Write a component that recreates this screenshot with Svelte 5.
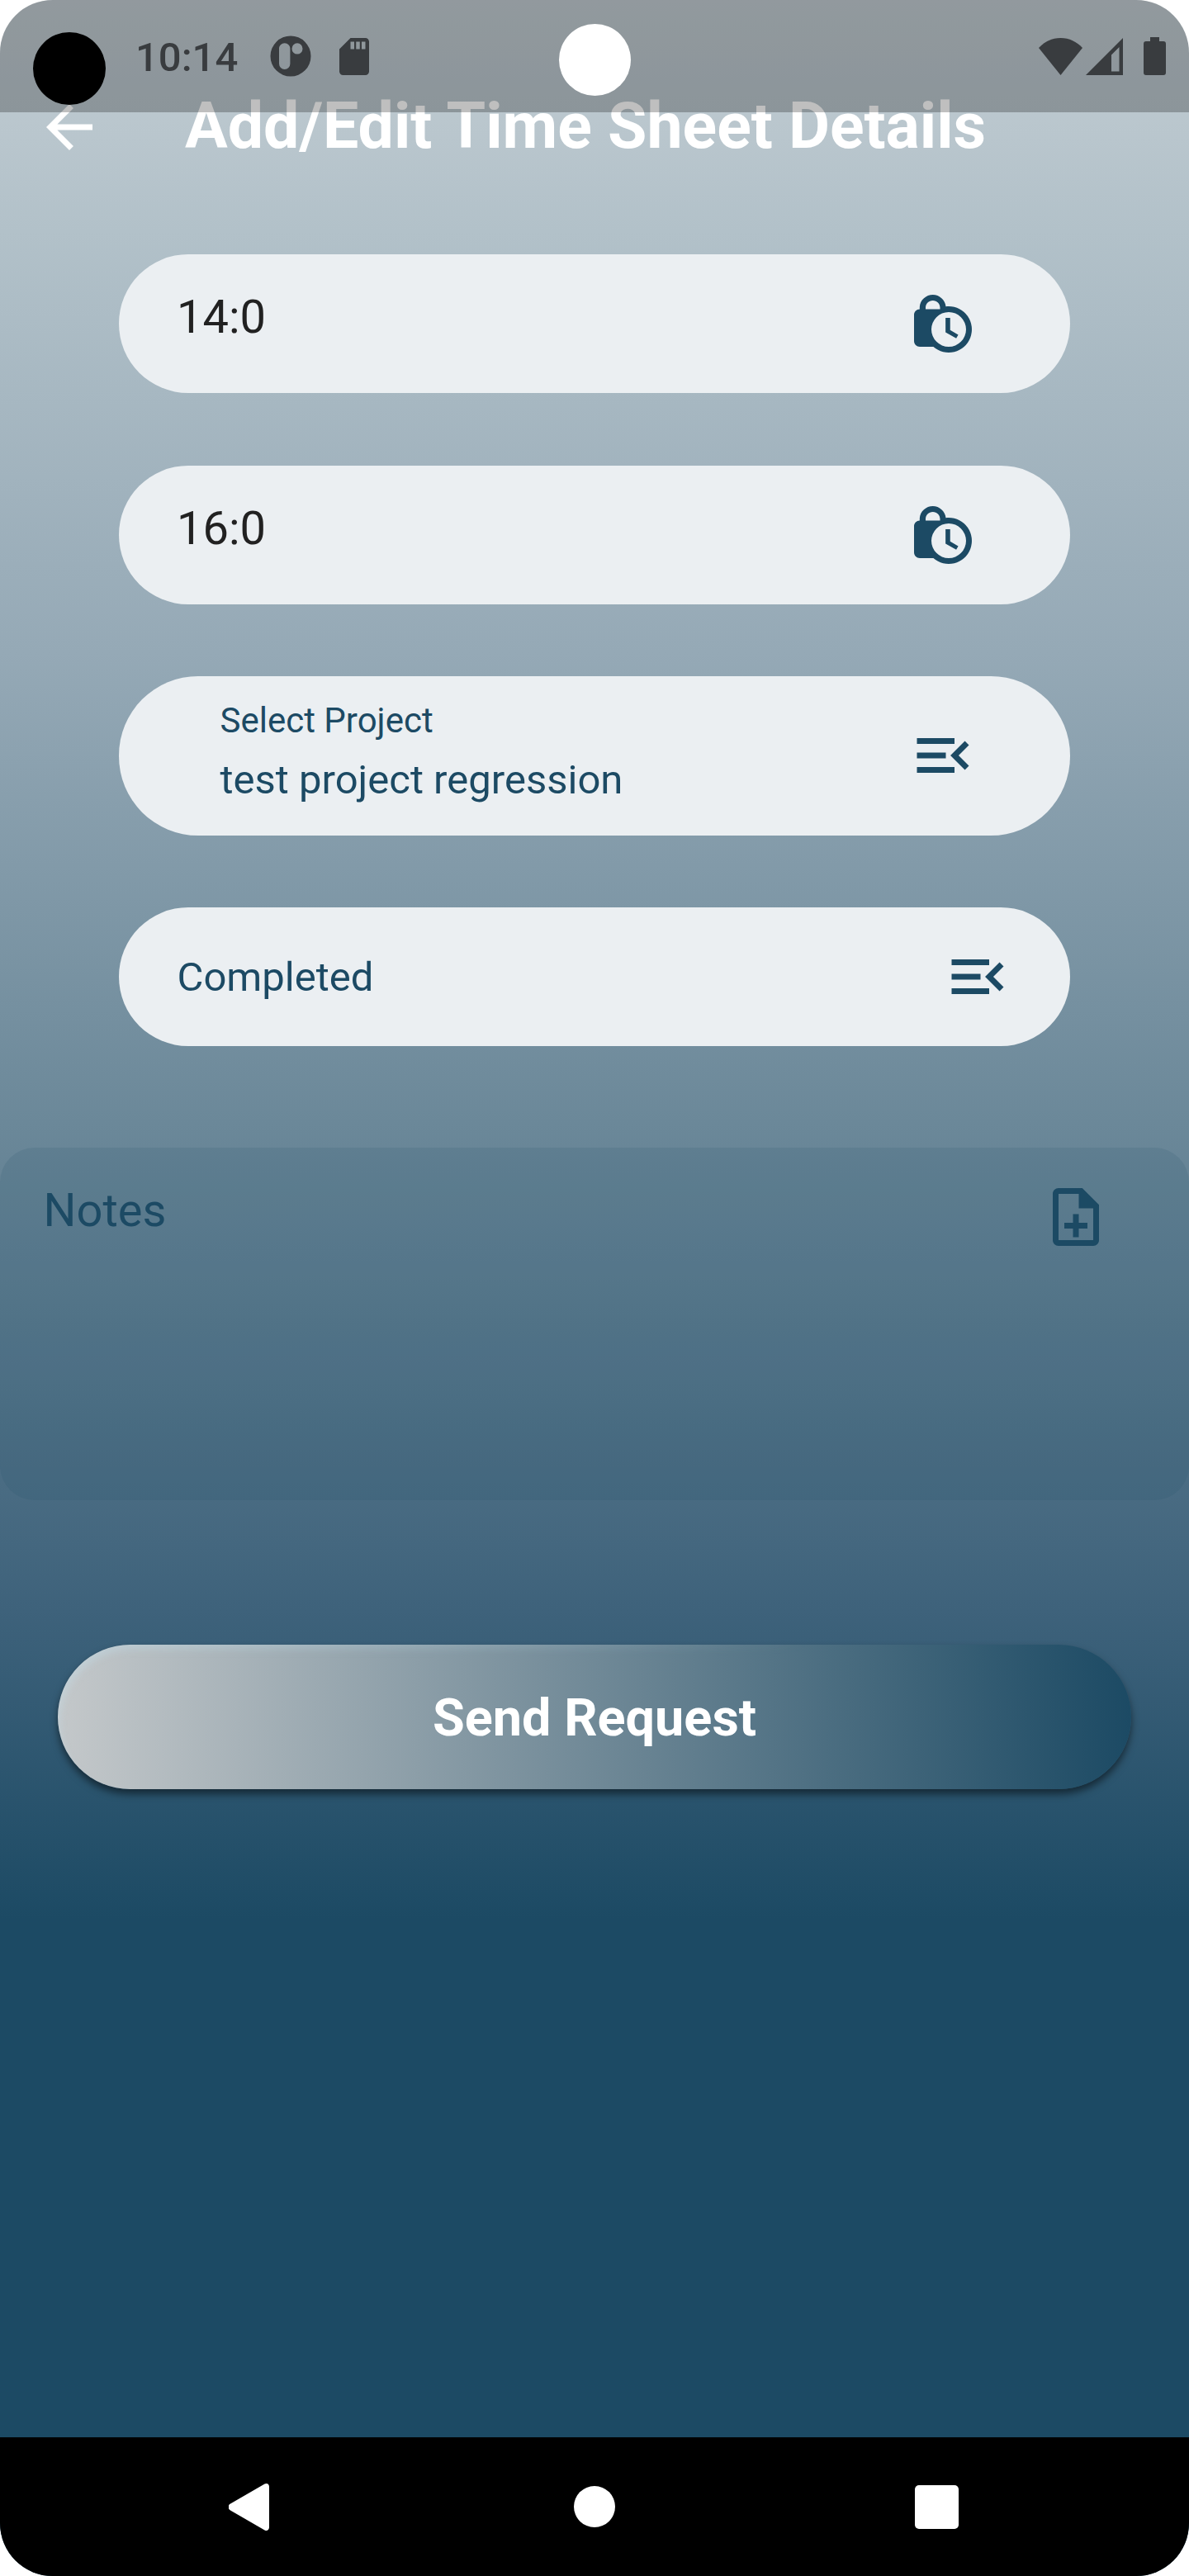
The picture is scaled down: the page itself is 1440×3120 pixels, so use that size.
<script>
  const timeFields = ['14:0', '16:0'];
</script>

{#snippet lockClock()}
  <svg class="icon" viewBox="0 0 24 24" aria-hidden="true">
    <path
      fill-rule="evenodd"
      d="M14 6c-.34 0-.68.02-1 .07C12.800 3.800 10.800 2 8.500 2S4.100 3.800 3.950 6.200V7C2.900 7 2 7.900 2 9v9c0 1.100.9 2 2 2h4.700A8 8 0 1 0 14 6zM6 6.500C6 5.100 7.100 4 8.500 4S11 5.100 11 6.500V7H6zM14 20a6 6 0 1 1 0-12 6 6 0 0 1 0 12z"
    />
    <path d="M12.900 10h1.600v4.200l2.800 1.650-.7 1.250-3.700-2.100z" />
  </svg>
{/snippet}

{#snippet menuOpen()}
  <svg class="icon" viewBox="0 0 24 24" aria-hidden="true">
    <path d="M3 18h13v-2H3v2zm0-5h10v-2H3v2zm0-7v2h13V6H3zm18 9.590L17.420 12 21 8.410 19.590 7l-5 5 5 5L21 15.590z" />
  </svg>
{/snippet}

<main class="screen">
  <div class="status">
    <span class="clock">10:14</span>
    <svg class="app-badge" viewBox="0 0 50 50" aria-hidden="true">
      <path
        fill-rule="evenodd"
        d="M25 .5a24.500 24.500 0 1 0 0 49 24.500 24.500 0 0 0 0-49zM17.700 9.200c3.800 0 6.700 3 6.700 6.700v18.400a6.700 6.700 0 0 1-13.400 0V15.900c0-3.700 3-6.700 6.700-6.700zM33 9.200a6.500 6.700 0 1 1 0 13.400 6.500 6.700 0 0 1 0-13.400z"
      />
    </svg>
    <svg class="sd" viewBox="4 2 16 20" aria-hidden="true">
      <path d="M18 2h-8L4 8v12c0 1.100.9 2 2 2h12c1.100 0 2-.9 2-2V4c0-1.100-.9-2-2-2zm-6 6h-2V4h2v4zm3 0h-2V4h2v4zm3 0h-2V4h2v4z" />
    </svg>
    <div class="signals">
      <svg class="wifi" viewBox="0 0 53 45" aria-hidden="true">
        <path d="M26.500 0C16 0 7 4.500 0 12l26.500 33L53 12C46 4.500 37 0 26.500 0z" />
      </svg>
      <svg class="cell" viewBox="0 0 45 45" aria-hidden="true">
        <path fill-rule="evenodd" d="M45 0v45H0zM40.500 11 31 20.500V40.500h9.500z" />
      </svg>
      <svg class="battery" viewBox="0 0 27 46" aria-hidden="true">
        <path d="M8 0h11v5h5a3 3 0 0 1 3 3v35a3 3 0 0 1-3 3H3a3 3 0 0 1-3-3V8a3 3 0 0 1 3-3h5z" />
      </svg>
    </div>
  </div>
  <div class="camera"></div>
  <div class="recorder"></div>

  <header class="appbar">
    <svg class="icon back" viewBox="0 0 24 24" aria-hidden="true">
      <path d="M20 11H7.830l5.590-5.590L12 4l-8 8 8 8 1.410-1.410L7.830 13H20v-2z" />
    </svg>
    <h1>Add/Edit Time Sheet Details</h1>
  </header>

  <form class="fields">
    {#each timeFields as value}
      <div class="field time">
        <span class="value">{value}</span>
        {@render lockClock()}
      </div>
    {/each}
    <div class="field project">
      <div class="stack">
        <span class="label">Select Project</span>
        <span class="choice">test project regression</span>
      </div>
      {@render menuOpen()}
    </div>
    <div class="field state">
      <span class="choice">Completed</span>
      {@render menuOpen()}
    </div>
  </form>

  <section class="notes">
    <span class="notes-label">Notes</span>
    <svg class="icon" viewBox="0 0 24 24" aria-hidden="true">
      <path
        fill-rule="evenodd"
        d="M14.200 2H6c-1.100 0-2 .9-2 2v16c0 1.100.89 2 1.990 2H18c1.100 0 2-.9 2-2V7.800zM18 20H6V4h7v5h5zM13 11h-2v3H8v2h3v3h2v-3h3v-2h-3z"
      />
    </svg>
  </section>

  <button class="send" type="button">Send Request</button>

  <nav class="navbar">
    <svg class="nav-back" viewBox="0 0 49 57" aria-hidden="true">
      <path d="M43.500.6 2 24.500a4.500 4.500 0 0 0 0 8l41.500 23.900c3 1.500 5.500-.4 5.500-3.400V4c0-3-2.500-4.900-5.500-3.400z" />
    </svg>
    <span class="nav-home"></span>
    <span class="nav-recent"></span>
  </nav>
</main>

<style>
  :global(body) {
    margin: 0;
    background: #fff;
  }

  .screen {
    position: relative;
    display: flex;
    flex-direction: column;
    box-sizing: border-box;
    width: 1440px;
    height: 3120px;
    overflow: hidden;
    border-radius: 64px;
    background: linear-gradient(
      180deg,
      #c3cdd3 0,
      #b2c1c9 280px,
      #95a9b6 790px,
      #6b8899 1360px,
      #3e627b 1950px,
      #1c4a64 2325px
    );
    color: #1c4a64;
    font-family: Roboto, 'Liberation Sans', sans-serif;
  }

  .icon {
    flex: none;
    display: block;
    width: 84px;
    height: 84px;
    fill: currentColor;
  }

  /* Translucent system bar drawn over the top of the app bar */
  .status {
    position: absolute;
    inset: 0 0 auto;
    z-index: 1;
    display: flex;
    align-items: center;
    box-sizing: border-box;
    height: 136px;
    padding: 2px 28px 2px 164px;
    background: rgba(0, 0, 0, 0.25);
    fill: #393c3f;
    color: #393c3f;
  }

  .clock {
    box-sizing: border-box;
    width: 163px;
    padding-top: 3px;
    font-size: 49px;
    font-weight: 500;
    line-height: 57px;
  }

  .app-badge {
    width: 50px;
    height: 50px;
  }

  .sd {
    width: 36px;
    height: 45px;
    margin-left: 34px;
  }

  .signals {
    display: flex;
    align-items: center;
    margin-left: auto;
  }

  .wifi {
    width: 53px;
    height: 45px;
  }

  .cell {
    width: 45px;
    height: 45px;
    margin: 0 25px 0 4px;
  }

  .battery {
    width: 27px;
    height: 46px;
  }

  .camera,
  .recorder {
    position: absolute;
    z-index: 2;
    border-radius: 50%;
  }

  .camera {
    top: 29px;
    left: 677px;
    width: 87px;
    height: 87px;
    background: #fff;
  }

  .recorder {
    top: 39px;
    left: 40px;
    width: 88px;
    height: 88px;
    background: #000;
  }

  .appbar {
    display: flex;
    align-items: flex-start;
    height: 84px;
    padding: 112px 42px 0;
    color: #fff;
  }

  h1 {
    margin: 0 0 0 98px;
    font-size: 77px;
    font-weight: 700;
    line-height: 82px;
    white-space: nowrap;
  }

  .fields {
    display: flex;
    flex-direction: column;
    gap: 87.5px;
    margin: 112px 144px 0;
  }

  .field {
    display: flex;
    align-items: center;
    justify-content: space-between;
    box-sizing: border-box;
    height: 168px;
    border-radius: 96px;
    background: #ebeff2;
  }

  .time {
    padding: 0 112px 0 70px;
  }

  .value {
    margin-bottom: 16px;
    color: #212121;
    font-size: 56px;
    line-height: 66px;
  }

  .project {
    height: 192.5px;
    padding: 0 112.5px 0 122.5px;
  }

  .stack {
    display: flex;
    flex-direction: column;
    margin-top: 2px;
  }

  .label {
    font-size: 42px;
    line-height: 56px;
  }

  .choice {
    padding-top: 2px;
    font-size: 49px;
    line-height: 84px;
  }

  .state {
    padding: 0 70.5px;
  }

  .notes {
    display: flex;
    align-items: flex-start;
    justify-content: space-between;
    box-sizing: border-box;
    height: 427px;
    margin-top: 122.5px;
    padding: 42.5px 95px 0 52.5px;
    border-radius: 42px;
    background: rgba(28, 74, 100, 0.13);
  }

  .notes-label {
    padding-top: 1px;
    font-size: 56px;
    line-height: 66px;
  }

  .send {
    position: relative;
    height: 175px;
    margin: 175px 70px 0;
    padding: 3px 0 0;
    border: 0;
    border-radius: 88px;
    background: linear-gradient(90deg, #c4c8ca, #1c4a64);
    box-shadow: 0 6px 10px rgba(0, 0, 0, 0.5);
    color: #fff;
    font-family: inherit;
    font-size: 63px;
    font-weight: 700;
    line-height: 74px;
  }

  /* Soft light along the upper edge that fades out towards the dark end */
  .send::before {
    content: '';
    position: absolute;
    inset: 0;
    border-radius: inherit;
    box-shadow: inset 4px 8px 8px -2px rgba(195, 225, 240, 0.35);
    mask-image: linear-gradient(90deg, #000, transparent 70%);
  }

  .navbar {
    display: grid;
    grid-template-columns: repeat(3, 414.5px);
    place-content: center;
    place-items: center;
    height: 168px;
    margin-top: auto;
    background: #000;
  }

  .nav-back {
    width: 49px;
    height: 57px;
    margin-right: 9px;
    fill: #fff;
  }

  .nav-home {
    width: 50px;
    height: 50px;
    border-radius: 50%;
    background: #fff;
  }

  .nav-recent {
    width: 53px;
    height: 53px;
    border-radius: 5px;
    background: #fff;
  }
</style>
